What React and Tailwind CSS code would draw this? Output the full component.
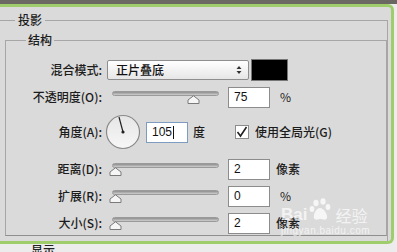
import React from "react";

const font = { fontFamily: '"Noto Sans CJK SC", "Noto Sans", sans-serif' };

function Thumb() {
  return (
    <svg width="13" height="9" viewBox="0 0 13 9" className="block">
      <path d="M1 8.5 L1 5 L6.5 0.8 L12 5 L12 8.5 Z" fill="#f6f6f6" stroke="#7a7a7a" strokeWidth="1" />
    </svg>
  );
}

function Slider({ pos }) {
  return (
    <div className="relative w-[111px] h-[22px]">
      <div className="absolute left-[4px] right-0 top-[5px] h-[5px] rounded-full bg-gradient-to-b from-[#8e8e8e] to-[#cfcfcf] border border-[#9a9a9a]" />
      <div className="absolute top-[9px]" style={{ left: pos }}>
        <Thumb />
      </div>
    </div>
  );
}

function Box({ value, blue }) {
  return (
    <div
      className={
        "w-[42px] h-[21px] bg-white border flex items-center pl-[5px] text-[12px] text-[#111] " +
        (blue ? "border-[#7d9cc0]" : "border-[#8c8c8c]")
      }
      style={{ fontFamily: '"Liberation Sans", sans-serif' }}
    >
      {value}
      {blue && <span className="ml-[1px] w-[1px] h-[13px] bg-[#111]" />}
    </div>
  );
}

function Label({ children }) {
  return <div className="w-[97px] text-right pr-[1px] text-[12px] leading-none text-[#1c1c1c] font-medium">{children}</div>;
}

export default function App() {
  return (
    <div className="relative w-[397px] h-[252px] overflow-hidden bg-[#ececec]" style={font}>
      <div className="h-[4px] bg-[#6b6763]" />
      <div className="w-[394px] h-[240px] bg-[#dadada] border-t-[3px] border-r-[3px] border-b-[3px] border-[#a0cd6c] rounded-tr-[6px] rounded-br-[6px] overflow-hidden">
        <fieldset className="mt-[5px] w-[388px] border-t border-r border-[#a6a6a6] h-[240px]">
          <legend className="ml-[15px] px-[3px] text-[12px] leading-[16px] h-[16px] font-medium text-[#1c1c1c]">投影</legend>
          <fieldset className="mt-[4px] ml-[5px] w-[382px] h-[204px] border border-[#a6a6a6] border-b-[#8f8f8f]">
            <legend className="ml-[20px] px-[2px] text-[12px] leading-[16px] h-[16px] font-medium text-[#1c1c1c]">结构</legend>

            <div className="mt-[11px] flex items-center h-[22px]">
              <Label>混合模式:</Label>
              <div className="ml-[4px] w-[142px] h-[20px] rounded-[2px] border border-[#8e8e8e] bg-gradient-to-b from-white to-[#e6e6e6] flex items-center pl-[8px] pr-[6px] text-[12px] font-medium text-[#111]">
                <span className="flex-1">正片叠底</span>
                <svg width="6" height="10" viewBox="0 0 6 10">
                  <path d="M0.5 4 L3 1 L5.5 4 Z M0.5 6 L3 9 L5.5 6 Z" fill="#333" />
                </svg>
              </div>
              <div className="ml-[2px] w-[37px] h-[22px] bg-black border border-[#777]" />
            </div>

            <div className="mt-[5px] flex items-center h-[22px]">
              <Label>不透明度(O):</Label>
              <div className="ml-[5px]">
                <Slider pos={79} />
              </div>
              <div className="ml-[9px]">
                <Box value="75" />
              </div>
              <span className="ml-[10px] text-[12px] text-[#1c1c1c]">%</span>
            </div>

            <div className="mt-[6px] flex items-center h-[36px]">
              <Label>角度(A):</Label>
              <svg width="36" height="36" viewBox="0 0 36 36" className="ml-[2px]">
                <defs>
                  <linearGradient id="dg" x1="0" y1="0" x2="0" y2="1">
                    <stop offset="0" stopColor="#e6e6e6" />
                    <stop offset="1" stopColor="#f7f7f7" />
                  </linearGradient>
                </defs>
                <circle cx="18" cy="18" r="16.5" fill="url(#dg)" stroke="#8a8a8a" strokeWidth="1.2" />
                <line x1="18" y1="18" x2="14" y2="3" stroke="#222" strokeWidth="1.2" />
                <circle cx="18" cy="18" r="1.6" fill="#222" />
              </svg>
              <div className="ml-[5px]">
                <Box value="105" blue />
              </div>
              <span className="ml-[5px] text-[12px] font-medium text-[#1c1c1c]">度</span>
              <div className="ml-[30px] w-[14px] h-[14px] bg-white border border-[#8c8c8c] flex items-center justify-center">
                <svg width="12" height="12" viewBox="0 0 12 12">
                  <path d="M1.5 6 L4.5 10 L10.5 1" fill="none" stroke="#222" strokeWidth="1.6" />
                </svg>
              </div>
              <span className="ml-[6px] text-[12px] font-medium text-[#1c1c1c]">使用全局光(G)</span>
            </div>

            <div className="mt-[8px] flex items-center h-[22px]">
              <Label>距离(D):</Label>
              <div className="ml-[5px]">
                <Slider pos={1} />
              </div>
              <div className="ml-[9px]">
                <Box value="2" />
              </div>
              <span className="ml-[6px] text-[12px] font-medium text-[#1c1c1c]">像素</span>
            </div>

            <div className="mt-[5px] flex items-center h-[22px]">
              <Label>扩展(R):</Label>
              <div className="ml-[5px]">
                <Slider pos={1} />
              </div>
              <div className="ml-[9px]">
                <Box value="0" />
              </div>
              <span className="ml-[10px] text-[12px] text-[#1c1c1c]">%</span>
            </div>

            <div className="mt-[5px] flex items-center h-[22px]">
              <Label>大小(S):</Label>
              <div className="ml-[5px]">
                <Slider pos={1} />
              </div>
              <div className="ml-[9px]">
                <Box value="2" />
              </div>
              <span className="ml-[6px] text-[12px] font-medium text-[#1c1c1c]">像素</span>
            </div>
          </fieldset>
        </fieldset>
      </div>
      <div className="ml-[31px] -mt-[1px] text-[12px] leading-[14px] font-medium text-[#222]">显示</div>

      <div className="absolute left-[281px] top-[197px] w-[110px] text-white/70 pointer-events-none">
        <div className="flex items-end h-[26px]">
          <span className="text-[17px] font-bold leading-none" style={{ fontFamily: '"Liberation Sans", sans-serif' }}>Bai</span>
          <svg width="26" height="26" viewBox="0 0 26 26" className="mx-[1px]">
            <g fill="rgba(255,255,255,0.75)">
              <ellipse cx="8" cy="6" rx="2.6" ry="3.2" />
              <ellipse cx="15" cy="4.5" rx="2.6" ry="3.2" />
              <ellipse cx="4" cy="12" rx="2.4" ry="3" />
              <ellipse cx="20" cy="10" rx="2.4" ry="3" />
              <path d="M12 11 C8 11 5 18 6 21 C7 24 11 22 12.5 22 C14 22 18 24 19 21 C20 18 16 11 12 11 Z" />
            </g>
          </svg>
          <span className="text-[16px] leading-none">经验</span>
        </div>
        <div className="text-[10px] leading-[12px] mt-[2px] tracking-[0.5px]" style={{ fontFamily: '"Liberation Sans", sans-serif' }}>jingyan.baidu.com</div>
      </div>
    </div>
  );
}
